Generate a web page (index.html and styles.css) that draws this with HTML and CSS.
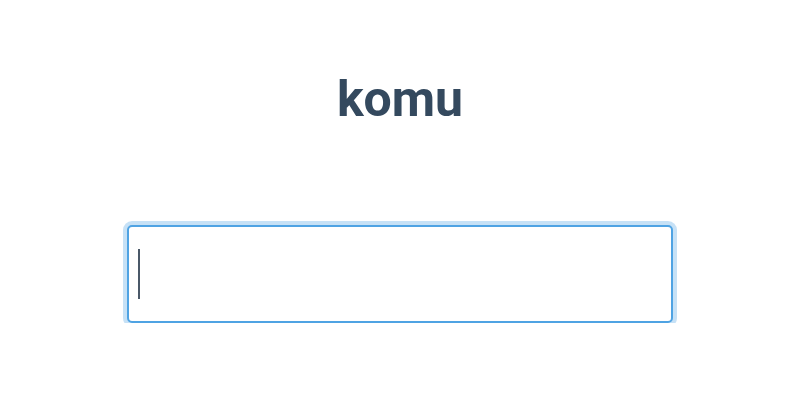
FILE: index.html
```html
<!DOCTYPE html>
<html lang="en">
<head>
<meta charset="utf-8">
<title>komu</title>
<link rel="stylesheet" href="styles.css">
</head>
<body>
<main class="app">
  <h1 class="title">komu</h1>
  <div class="field">
    <input class="search" type="text" autofocus aria-label="komu">
    <span class="caret"></span>
  </div>
</main>
</body>
</html>
```

FILE: styles.css
```css
html, body {
  margin: 0;
  padding: 0;
  background: #ffffff;
}

.app {
  font-family: Roboto, "Liberation Sans", Arial, sans-serif;
  color: #34495e;
  display: flex;
  flex-direction: column;
  align-items: center;
  padding-top: 71px;
}

.title {
  margin: 0;
  font-size: 50px;
  font-weight: 700;
  line-height: 56px;
}

.field {
  position: relative;
  margin-top: 98px;
  width: 546px;
}

.search {
  display: block;
  box-sizing: border-box;
  width: 546px;
  height: 98px;
  margin: 0;
  padding: 0 10px;
  border: 2px solid #4fa3e3;
  border-radius: 5px;
  box-shadow: 0 0 0 4px rgba(79, 163, 227, 0.32);
  outline: none;
  font-family: Roboto, "Liberation Sans", Arial, sans-serif;
  font-size: 42px;
  color: #34495e;
  caret-color: transparent;
  background: #ffffff;
}

.caret {
  position: absolute;
  left: 11px;
  top: 24px;
  width: 2px;
  height: 50px;
  background: #4a5868;
}
```
